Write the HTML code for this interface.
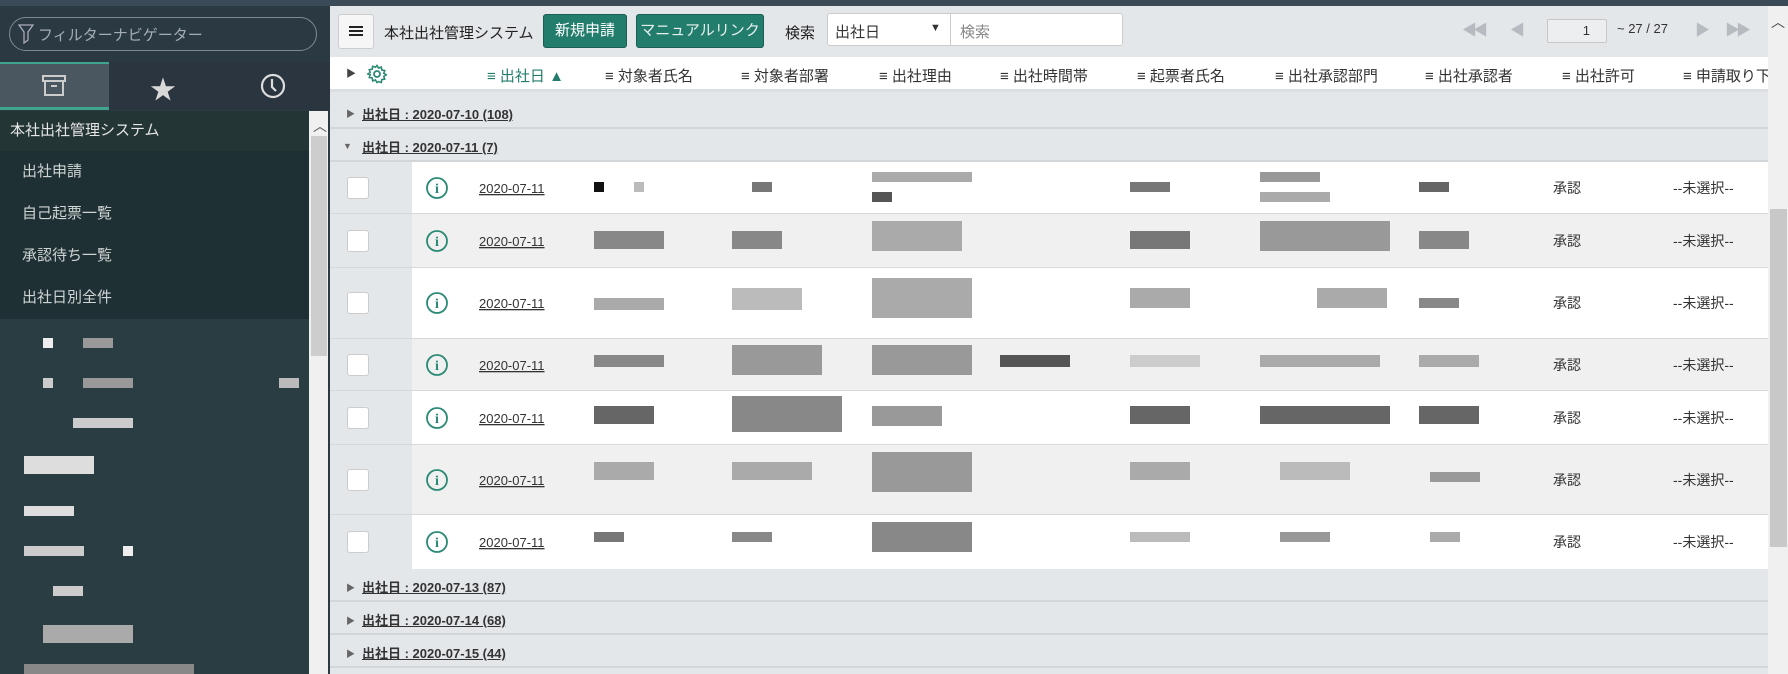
<!DOCTYPE html>
<html><head><meta charset="utf-8"><style>
*{margin:0;padding:0;box-sizing:border-box}
body{width:1788px;height:674px;overflow:hidden;background:#e4e7ea;font-family:"Liberation Sans","Noto Sans CJK JP",sans-serif;position:relative;color:#333}
.a{position:absolute}
.px{position:absolute;width:10px;height:10px}
</style></head><body>
<!-- top strip -->
<div class="a" style="left:0;top:0;width:1788px;height:6px;background:#3b4a57"></div>
<!-- sidebar -->
<div class="a" style="left:0;top:6px;width:330px;height:668px;background:#2b3a42"></div>
<div class="a" style="left:9px;top:17px;width:308px;height:34px;border:1px solid #7d8a92;border-radius:17px"></div>
<svg class="a" style="left:18px;top:24px" width="16" height="20" viewBox="0 0 16 20"><path d="M1 1h14l-5 7v8l-4 3V8z" fill="none" stroke="#aab" stroke-width="1.3"/></svg>
<div class="a" style="left:38px;top:24px;font-size:15px;color:#a4adb3">フィルターナビゲーター</div>
<div class="a" style="left:0;top:62px;width:330px;height:48px;background:#2a3540"></div>
<div class="a" style="left:0;top:62px;width:109px;height:48px;background:#4b5760;border-top:2px solid #3fa58e;border-bottom:3px solid #3fa58e"></div>
<svg class="a" style="left:42px;top:75px" width="24" height="22" viewBox="0 0 24 22"><rect x="1" y="1" width="22" height="5" fill="none" stroke="#ccc" stroke-width="2"/><rect x="3" y="6" width="18" height="14" fill="none" stroke="#ccc" stroke-width="2"/><rect x="9" y="10" width="6" height="2" fill="#ccc"/></svg>
<div class="a" style="left:150px;top:70px;font-size:26px;color:#d8d8d8">★</div>
<svg class="a" style="left:260px;top:73px" width="26" height="26" viewBox="0 0 26 26"><circle cx="13" cy="13" r="11" fill="none" stroke="#ddd" stroke-width="2.2"/><path d="M12 6v8l4 4" fill="none" stroke="#ddd" stroke-width="2.2"/></svg>
<div class="a" style="left:0;top:111px;width:309px;height:40px;background:#243535;color:#e6e6e6;font-size:15px;line-height:40px;padding-left:10px">本社出社管理システム</div>
<div class="a" style="left:0;top:151px;width:309px;height:168px;background:#1f3034;color:#cfd4d4;font-size:15px">
<div style="height:42px;line-height:42px;padding-left:22px">出社申請</div>
<div style="height:42px;line-height:42px;padding-left:22px">自己起票一覧</div>
<div style="height:42px;line-height:42px;padding-left:22px">承認待ち一覧</div>
<div style="height:42px;line-height:42px;padding-left:22px">出社日別全件</div></div>
<div class="a" style="left:0;top:319px;width:309px;height:355px;background:#293d42"></div>
<div class="a" style="left:309px;top:111px;width:19px;height:563px;background:#f0f0f0"></div>
<div class="a" style="left:311px;top:136px;width:16px;height:220px;background:#cdcdcd"></div>
<div class="a" style="left:313px;top:116px;font-size:14px;color:#555">︿</div>
<!-- sidebar blobs -->
<div class="px" style="left:43px;top:338px;background:#eee"></div><div class="px" style="left:83px;top:338px;background:#999;width:30px"></div>
<div class="px" style="left:43px;top:378px;background:#ccc"></div><div class="px" style="left:83px;top:378px;background:#999;width:50px"></div><div class="px" style="left:279px;top:378px;background:#bbb;width:20px"></div>
<div class="px" style="left:73px;top:418px;background:#ccc;width:60px"></div>
<div class="px" style="left:24px;top:456px;background:#ddd;width:70px;height:18px"></div>
<div class="px" style="left:24px;top:506px;background:#ddd;width:50px"></div>
<div class="px" style="left:24px;top:546px;background:#ccc;width:60px"></div><div class="px" style="left:123px;top:546px;background:#eee"></div>
<div class="px" style="left:53px;top:586px;background:#ccc;width:30px"></div>
<div class="px" style="left:43px;top:625px;background:#aaa;width:90px;height:18px"></div>
<div class="px" style="left:24px;top:664px;background:#888;width:170px"></div>
<!-- main toolbar -->
<div class="a" style="left:330px;top:6px;width:1438px;height:51px;background:#e4e7ea"></div>
<div class="a" style="left:338px;top:14px;width:36px;height:35px;background:#f6f6f6;border:1px solid #ccc;border-radius:3px"></div>
<div class="a" style="left:349px;top:26px;width:14px;height:2px;background:#222;box-shadow:0 4px #222,0 8px #222"></div>
<div class="a" style="left:384px;top:22px;font-size:15px;color:#222">本社出社管理システム</div>
<div class="a" style="left:543px;top:14px;width:84px;height:34px;background:#237d6c;border:1px solid #1b5e52;border-radius:3px;color:#fff;font-size:15px;line-height:32px;text-align:center">新規申請</div>
<div class="a" style="left:636px;top:14px;width:128px;height:34px;background:#237d6c;border:1px solid #1b5e52;border-radius:3px;color:#e8f0ee;font-size:15px;line-height:32px;text-align:center">マニュアルリンク</div>
<div class="a" style="left:785px;top:22px;font-size:15px;color:#222">検索</div>
<div class="a" style="left:827px;top:13px;width:296px;height:33px;background:#fff;border:1px solid #ccc;border-radius:3px"></div>
<div class="a" style="left:950px;top:13px;width:1px;height:33px;background:#ccc"></div>
<div class="a" style="left:835px;top:21px;font-size:15px;color:#333">出社日</div>
<div class="a" style="left:930px;top:22px;font-size:11px;color:#333">▼</div>
<div class="a" style="left:960px;top:21px;font-size:15px;color:#888">検索</div>
<div class="a" style="left:1462px;top:19px;font-size:15px;color:#b5bbc0;letter-spacing:-4px">◀◀</div>
<div class="a" style="left:1510px;top:19px;font-size:15px;color:#b5bbc0">◀</div>
<div class="a" style="left:1547px;top:19px;width:60px;height:24px;background:#eceef0;border:1px solid #c8c8c8;border-radius:2px;font-size:13px;text-align:right;padding-right:16px;line-height:22px;color:#333">1</div>
<div class="a" style="left:1617px;top:21px;font-size:13px;color:#333">~ 27 / 27</div>
<div class="a" style="left:1695px;top:19px;font-size:15px;color:#b5bbc0">▶</div>
<div class="a" style="left:1725px;top:19px;font-size:15px;color:#b5bbc0;letter-spacing:-4px">▶▶</div>
<!-- main scrollbar -->
<div class="a" style="left:1768px;top:6px;width:20px;height:668px;background:#f0f0f0"></div>
<div class="a" style="left:1771px;top:12px;font-size:14px;color:#444">︿</div>
<div class="a" style="left:1770px;top:209px;width:17px;height:338px;background:#c8c8c8"></div>
<!-- header row -->
<div class="a" style="left:330px;top:57px;width:1438px;height:35px;background:#fff;border-bottom:3px solid #dcdfe2"></div>
<div class="a" style="left:346px;top:65px;font-size:10px;color:#444">▶</div>
<svg class="a" style="left:367px;top:64px" width="20" height="20" viewBox="0 0 20 20"><circle cx="10" cy="10" r="3" fill="none" stroke="#2a8a75" stroke-width="1.8"/><path d="M10 1.5l1.5 2.5 2.8-.9.5 2.9 2.9.5-.9 2.8 2.5 1.5-2.5 1.5.9 2.8-2.9.5-.5 2.9-2.8-.9L10 18.5 8.5 16l-2.8.9-.5-2.9-2.9-.5.9-2.8L.7 10l2.5-1.5L2.3 5.7l2.9-.5.5-2.9 2.8.9z" fill="none" stroke="#2a8a75" stroke-width="1.6"/></svg>
<div style="font-size:15px;color:#333">
<div class="a" style="left:487px;top:65px;color:#237d6c">≡ 出社日 ▲</div>
<div class="a" style="left:605px;top:65px">≡ 対象者氏名</div>
<div class="a" style="left:741px;top:65px">≡ 対象者部署</div>
<div class="a" style="left:879px;top:65px">≡ 出社理由</div>
<div class="a" style="left:1000px;top:65px">≡ 出社時間帯</div>
<div class="a" style="left:1137px;top:65px">≡ 起票者氏名</div>
<div class="a" style="left:1275px;top:65px">≡ 出社承認部門</div>
<div class="a" style="left:1425px;top:65px">≡ 出社承認者</div>
<div class="a" style="left:1562px;top:65px">≡ 出社許可</div>
<div class="a" style="left:1683px;top:65px;width:85px;overflow:hidden;white-space:nowrap">≡ 申請取り下げ</div>
</div>
<!-- groups -->
<div class="a" style="left:330px;top:96px;width:1438px;height:33px;border-bottom:2px solid #d3d6d9"></div>
<div class="a" style="left:346px;top:107px;font-size:9px;color:#666">▶</div>
<div class="a" style="left:362px;top:104px;font-size:13px;font-weight:bold;color:#333;text-decoration:underline">出社日 : 2020-07-10 (108)</div>
<div class="a" style="left:330px;top:129px;width:1438px;height:33px;border-bottom:2px solid #d3d6d9"></div>
<div class="a" style="left:343px;top:141px;font-size:9px;color:#666">▼</div>
<div class="a" style="left:362px;top:137px;font-size:13px;font-weight:bold;color:#333;text-decoration:underline">出社日 : 2020-07-11 (7)</div>

<div id="rows"></div>
<div class="a" style="left:330px;top:569px;width:1438px;height:33px;border-bottom:2px solid #d3d6d9"></div>
<div class="a" style="left:346px;top:581px;font-size:9px;color:#666">▶</div>
<div class="a" style="left:362px;top:577px;font-size:13px;font-weight:bold;color:#333;text-decoration:underline">出社日 : 2020-07-13 (87)</div>
<div class="a" style="left:330px;top:602px;width:1438px;height:33px;border-bottom:2px solid #d3d6d9"></div>
<div class="a" style="left:346px;top:614px;font-size:9px;color:#666">▶</div>
<div class="a" style="left:362px;top:610px;font-size:13px;font-weight:bold;color:#333;text-decoration:underline">出社日 : 2020-07-14 (68)</div>
<div class="a" style="left:330px;top:635px;width:1438px;height:33px;border-bottom:2px solid #d3d6d9"></div>
<div class="a" style="left:346px;top:647px;font-size:9px;color:#666">▶</div>
<div class="a" style="left:362px;top:643px;font-size:13px;font-weight:bold;color:#333;text-decoration:underline">出社日 : 2020-07-15 (44)</div>

<!-- data rows -->
<div class="a" style="left:412px;top:162px;width:1356px;height:52px;background:#fff"></div>
<div class="a" style="left:412px;top:214px;width:1356px;height:54px;background:#f0f0f0"></div>
<div class="a" style="left:412px;top:268px;width:1356px;height:71px;background:#fff"></div>
<div class="a" style="left:412px;top:339px;width:1356px;height:52px;background:#f0f0f0"></div>
<div class="a" style="left:412px;top:391px;width:1356px;height:54px;background:#fff"></div>
<div class="a" style="left:412px;top:445px;width:1356px;height:70px;background:#f0f0f0"></div>
<div class="a" style="left:412px;top:515px;width:1356px;height:54px;background:#fff"></div>
<div class="a" style="left:330px;top:213px;width:1438px;height:1px;background:#d8d8d8"></div>
<div class="a" style="left:330px;top:267px;width:1438px;height:1px;background:#d8d8d8"></div>
<div class="a" style="left:330px;top:338px;width:1438px;height:1px;background:#d8d8d8"></div>
<div class="a" style="left:330px;top:390px;width:1438px;height:1px;background:#d8d8d8"></div>
<div class="a" style="left:330px;top:444px;width:1438px;height:1px;background:#d8d8d8"></div>
<div class="a" style="left:330px;top:514px;width:1438px;height:1px;background:#d8d8d8"></div>

<div style="font-size:13px">
<!-- row template repeated -->
<div class="a" style="left:347px;top:177px;width:22px;height:22px;background:#fff;border:1px solid #ccc;border-radius:3px"></div>
<div class="a" style="left:347px;top:230px;width:22px;height:22px;background:#fff;border:1px solid #ccc;border-radius:3px"></div>
<div class="a" style="left:347px;top:292px;width:22px;height:22px;background:#fff;border:1px solid #ccc;border-radius:3px"></div>
<div class="a" style="left:347px;top:354px;width:22px;height:22px;background:#fff;border:1px solid #ccc;border-radius:3px"></div>
<div class="a" style="left:347px;top:407px;width:22px;height:22px;background:#fff;border:1px solid #ccc;border-radius:3px"></div>
<div class="a" style="left:347px;top:469px;width:22px;height:22px;background:#fff;border:1px solid #ccc;border-radius:3px"></div>
<div class="a" style="left:347px;top:531px;width:22px;height:22px;background:#fff;border:1px solid #ccc;border-radius:3px"></div>
</div>
<svg class="a" style="left:0;top:0" width="1788" height="674">
<g fill="none" stroke="#2a8a75" stroke-width="1.8">
<circle cx="437" cy="188" r="10"/><circle cx="437" cy="241" r="10"/><circle cx="437" cy="303" r="10"/><circle cx="437" cy="365" r="10"/><circle cx="437" cy="418" r="10"/><circle cx="437" cy="480" r="10"/><circle cx="437" cy="542" r="10"/></g>
<g fill="#2a8a75" font-family="Liberation Serif,serif" font-size="14" font-weight="bold" text-anchor="middle">
<text x="437" y="193">i</text><text x="437" y="246">i</text><text x="437" y="308">i</text><text x="437" y="370">i</text><text x="437" y="423">i</text><text x="437" y="485">i</text><text x="437" y="547">i</text></g>
<g fill="#333" font-family="Liberation Sans,sans-serif" font-size="13" text-decoration="underline">
<text x="479" y="193">2020-07-11</text><text x="479" y="246">2020-07-11</text><text x="479" y="308">2020-07-11</text><text x="479" y="370">2020-07-11</text><text x="479" y="423">2020-07-11</text><text x="479" y="485">2020-07-11</text><text x="479" y="547">2020-07-11</text></g>
<g fill="#333" font-family="Liberation Sans,Noto Sans CJK JP,sans-serif" font-size="14">
<text x="1553" y="193">承認</text><text x="1553" y="246">承認</text><text x="1553" y="308">承認</text><text x="1553" y="370">承認</text><text x="1553" y="423">承認</text><text x="1553" y="485">承認</text><text x="1553" y="547">承認</text>
<text x="1673" y="193">--未選択--</text><text x="1673" y="246">--未選択--</text><text x="1673" y="308">--未選択--</text><text x="1673" y="370">--未選択--</text><text x="1673" y="423">--未選択--</text><text x="1673" y="485">--未選択--</text><text x="1673" y="547">--未選択--</text></g>
<!-- blurred blobs -->
<g>
<rect x="594" y="182" width="10" height="10" fill="#111"/><rect x="634" y="182" width="10" height="10" fill="#bbb"/><rect x="752" y="182" width="20" height="10" fill="#777"/>
<rect x="872" y="172" width="100" height="10" fill="#aaa"/><rect x="872" y="192" width="20" height="10" fill="#555"/>
<rect x="1130" y="182" width="40" height="10" fill="#777"/><rect x="1260" y="172" width="60" height="10" fill="#999"/><rect x="1260" y="192" width="70" height="10" fill="#aaa"/><rect x="1419" y="182" width="30" height="10" fill="#666"/>
<rect x="594" y="231" width="70" height="18" fill="#888"/><rect x="732" y="231" width="50" height="18" fill="#888"/><rect x="872" y="221" width="90" height="30" fill="#aaa"/>
<rect x="1130" y="231" width="60" height="18" fill="#777"/><rect x="1260" y="221" width="130" height="30" fill="#999"/><rect x="1419" y="231" width="50" height="18" fill="#888"/>
<rect x="594" y="298" width="70" height="12" fill="#aaa"/><rect x="732" y="288" width="70" height="22" fill="#bbb"/><rect x="872" y="278" width="100" height="40" fill="#aaa"/>
<rect x="1130" y="288" width="60" height="20" fill="#aaa"/><rect x="1317" y="288" width="70" height="20" fill="#aaa"/><rect x="1419" y="298" width="40" height="10" fill="#888"/>
<rect x="594" y="355" width="70" height="12" fill="#888"/><rect x="732" y="345" width="90" height="30" fill="#999"/><rect x="872" y="345" width="100" height="30" fill="#999"/><rect x="1000" y="355" width="70" height="12" fill="#555"/>
<rect x="1130" y="355" width="70" height="12" fill="#ccc"/><rect x="1260" y="355" width="120" height="12" fill="#aaa"/><rect x="1419" y="355" width="60" height="12" fill="#aaa"/>
<rect x="594" y="406" width="60" height="18" fill="#666"/><rect x="732" y="396" width="110" height="36" fill="#888"/><rect x="872" y="406" width="70" height="20" fill="#999"/>
<rect x="1130" y="406" width="60" height="18" fill="#666"/><rect x="1260" y="406" width="130" height="18" fill="#666"/><rect x="1419" y="406" width="60" height="18" fill="#666"/>
<rect x="594" y="462" width="60" height="18" fill="#aaa"/><rect x="732" y="462" width="80" height="18" fill="#aaa"/><rect x="872" y="452" width="100" height="40" fill="#999"/>
<rect x="1130" y="462" width="60" height="18" fill="#aaa"/><rect x="1280" y="462" width="70" height="18" fill="#bbb"/><rect x="1430" y="472" width="50" height="10" fill="#999"/>
<rect x="594" y="532" width="30" height="10" fill="#777"/><rect x="732" y="532" width="40" height="10" fill="#888"/><rect x="872" y="522" width="100" height="30" fill="#888"/>
<rect x="1130" y="532" width="60" height="10" fill="#bbb"/><rect x="1280" y="532" width="50" height="10" fill="#999"/><rect x="1430" y="532" width="30" height="10" fill="#aaa"/>
</g>
</svg>
</body></html>
